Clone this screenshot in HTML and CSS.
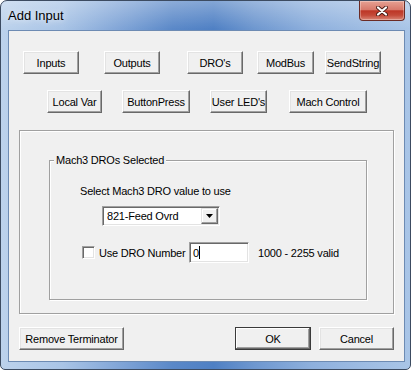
FILE: index.html
```html
<!DOCTYPE html>
<html lang="en">
<head>
    <meta charset="UTF-8">
    <title>Add Input</title>
    <link rel="stylesheet" href="styles.css">
</head>
<body>
    <div class="window">
        <div class="titlebar">
            <span class="title">Add Input</span>
            <button class="close">
                <svg width="12" height="10" viewBox="0 0 12 10">
                    <path d="M2 1.5L10 8.5M10 1.5L2 8.5" stroke="#4a1c16" stroke-width="4" stroke-linecap="round"/>
                    <path d="M2 1.5L10 8.5M10 1.5L2 8.5" stroke="#fff" stroke-width="2.2" stroke-linecap="round"/>
                </svg>
            </button>
        </div>
        <div class="client">
            <div class="row row-top">
                <button class="btn">Inputs</button>
                <button class="btn">Outputs</button>
                <button class="btn">DRO's</button>
                <button class="btn">ModBus</button>
                <button class="btn">SendString</button>
            </div>
            <div class="row row-mid">
                <button class="btn">Local Var</button>
                <button class="btn">ButtonPress</button>
                <button class="btn">User LED's</button>
                <button class="btn">Mach Control</button>
            </div>
            <div class="outer-box">
                <div class="group">
                    <span class="legend">Mach3 DROs Selected</span>
                    <div class="select-label">Select Mach3 DRO value to use</div>
                    <div class="combo">
                        <span>821-Feed Ovrd</span>
                        <span class="drop">
                            <svg width="7" height="4" viewBox="0 0 7 4"><path d="M0 0h7L3.5 4z" fill="#000"/></svg>
                        </span>
                    </div>
                    <div class="dro-row">
                        <span class="check"></span>
                        <span class="dro-label">Use DRO Number</span>
                        <div class="field">0<span class="caret"></span></div>
                        <span class="hint">1000 - 2255 valid</span>
                    </div>
                </div>
            </div>
            <div class="row row-bottom">
                <button class="btn">Remove Terminator</button>
                <button class="btn default">OK</button>
                <button class="btn">Cancel</button>
            </div>
        </div>
    </div>
</body>
</html>
```

FILE: styles.css
```css
body {
    margin: 0;
    background: #fff;
    font-family: "Liberation Sans", Arial, sans-serif;
    font-size: 11px;
    letter-spacing: -0.2px;
    color: #000;
}
.window {
    width: 411px;
    height: 370px;
    box-sizing: border-box;
    border: 1px solid #3c4b61;
    border-radius: 7px 7px 5px 5px;
    overflow: hidden;
    display: flex;
    flex-direction: column;
    background:
        linear-gradient(to bottom, rgba(255, 255, 255, 0.3), rgba(255, 255, 255, 0) 28px),
        linear-gradient(90deg, #bcd2ec 0%, #a9c4e6 15%, #7ea3d6 30%, #5a88c8 42%, #4f80c4 52%, #6e97cf 62%, #8eb0dd 76%, #9fbde3 90%, #a9c5e7 100%);
}
.titlebar {
    height: 29px;
    flex: none;
    display: flex;
    justify-content: space-between;
    align-items: flex-start;
    padding-left: 7px;
}
.title {
    font-size: 13px;
    line-height: 16px;
    letter-spacing: 0;
    margin-top: 7px;
    text-shadow: 0 0 6px rgba(255, 255, 255, 0.9);
}
.close {
    width: 46px;
    height: 20px;
    margin-right: 5px;
    padding: 0;
    border: 1px solid #6b2b25;
    border-top: none;
    border-radius: 0 0 4px 4px;
    background: linear-gradient(#e6a193, #d87a6c 45%, #bd3626 52%, #c44a39 75%, #d98676);
    box-shadow: inset 0 0 0 1px rgba(255, 255, 255, 0.3);
    display: flex;
    align-items: center;
    justify-content: center;
}
.client {
    flex: 1;
    margin: 0 5px 7px 7px;
    border: 1px solid #6d8bb3;
    background: #f0f0f0;
    padding-top: 20px;
}
.row {
    display: flex;
}
.btn {
    height: 23px;
    width: 56px;
    box-sizing: border-box;
    padding: 0;
    font: inherit;
    letter-spacing: inherit;
    white-space: nowrap;
    color: #000;
    background: #f0f0f0;
    border: 1px solid;
    border-color: #fff #696969 #696969 #fff;
    box-shadow: inset -1px -1px #a0a0a0, inset 1px 1px #e3e3e3;
}
.btn.default {
    border-color: #3a3a3a;
    box-shadow: inset -1px -1px #696969, inset 1px 1px #fff, inset -2px -2px #a0a0a0;
}
.row-top {
    padding-left: 14px;
}
.row-top .btn:nth-child(2) { margin-left: 25px; }
.row-top .btn:nth-child(3) { margin-left: 27px; }
.row-top .btn:nth-child(4) { margin-left: 14px; width: 57px; }
.row-top .btn:nth-child(5) { margin-left: 11px; }
.row-mid {
    margin-top: 16px;
    padding-left: 38px;
}
.row-mid .btn:nth-child(1) { width: 55px; }
.row-mid .btn:nth-child(2) { margin-left: 20px; width: 68px; }
.row-mid .btn:nth-child(3) { margin-left: 20px; width: 57px; }
.row-mid .btn:nth-child(4) { margin-left: 22px; width: 78px; }
.outer-box,
.group {
    box-sizing: border-box;
    border: 1px solid #a0a0a0;
    box-shadow: 1px 1px 0 #fff, inset 1px 1px 0 #fff;
}
.outer-box {
    margin: 17px 0 0 10px;
    width: 375px;
    height: 184px;
}
.group {
    margin: 29px 0 0 29px;
    width: 318px;
    height: 140px;
}
.legend {
    display: block;
    width: fit-content;
    margin: -7px 0 0 4px;
    padding: 0 2px;
    line-height: 13px;
    background: #f0f0f0;
}
.select-label {
    margin: 18px 0 0 30px;
    line-height: 13px;
}
.combo {
    margin: 8px 0 0 52px;
    width: 118px;
    height: 20px;
    box-sizing: border-box;
    display: flex;
    align-items: center;
    justify-content: space-between;
    padding-left: 4px;
    background: #fff;
    border: 1px solid;
    border-color: #a0a0a0 #fff #fff #a0a0a0;
    box-shadow: inset 1px 1px #696969, inset -1px -1px #e3e3e3;
}
.drop {
    width: 17px;
    height: 16px;
    margin-right: 1px;
    box-sizing: border-box;
    display: flex;
    align-items: center;
    justify-content: center;
    background: #f0f0f0;
    border: 1px solid;
    border-color: #e3e3e3 #696969 #696969 #e3e3e3;
    box-shadow: inset -1px -1px #a0a0a0, inset 1px 1px #fff;
}
.dro-row {
    margin-top: 16px;
    height: 21px;
    padding-left: 32px;
    display: flex;
    align-items: center;
}
.check {
    width: 13px;
    height: 13px;
    box-sizing: border-box;
    background: #fff;
    border: 1px solid;
    border-color: #a0a0a0 #fff #fff #a0a0a0;
    box-shadow: inset 1px 1px #696969, inset -1px -1px #e3e3e3;
}
.dro-label {
    margin-left: 4px;
    width: 90px;
}
.field {
    width: 60px;
    height: 21px;
    box-sizing: border-box;
    padding-left: 3px;
    display: flex;
    align-items: center;
    background: #fff;
    border: 1px solid;
    border-color: #a0a0a0 #fff #fff #a0a0a0;
    box-shadow: inset 1px 1px #696969, inset -1px -1px #e3e3e3;
}
.caret {
    width: 1px;
    height: 13px;
    background: #000;
}
.hint {
    margin-left: 9px;
}
.row-bottom {
    margin-top: 13px;
    padding-left: 10px;
}
.row-bottom .btn:nth-child(1) { width: 105px; }
.row-bottom .btn:nth-child(2) { margin-left: 111px; width: 76px; }
.row-bottom .btn:nth-child(3) { margin-left: 8px; width: 75px; }
```
